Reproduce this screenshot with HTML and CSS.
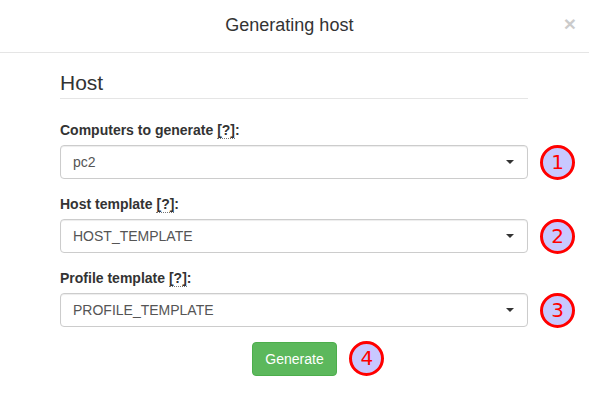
FILE: index.html
```html
<!DOCTYPE html>
<html lang="en">
<head>
<meta charset="utf-8">
<title>Generating host</title>
<link rel="stylesheet" href="styles.css">
</head>
<body>
<div class="modal">
  <div class="modal-header">
    <button class="close" type="button">&times;</button>
    <h4 class="modal-title">Generating host</h4>
  </div>
  <div class="modal-body">
    <form class="form">
      <fieldset>
        <legend>Host</legend>
        <div class="form-group">
          <label>Computers to generate <abbr>[?]</abbr>:</label>
          <div class="row">
            <div class="select"><span>pc2</span><i class="caret"></i></div>
            <span class="mark">1</span>
          </div>
        </div>
        <div class="form-group">
          <label>Host template <abbr>[?]</abbr>:</label>
          <div class="row">
            <div class="select"><span>HOST_TEMPLATE</span><i class="caret"></i></div>
            <span class="mark">2</span>
          </div>
        </div>
        <div class="form-group">
          <label>Profile template <abbr>[?]</abbr>:</label>
          <div class="row">
            <div class="select"><span>PROFILE_TEMPLATE</span><i class="caret"></i></div>
            <span class="mark">3</span>
          </div>
        </div>
      </fieldset>
    </form>
    <div class="actions">
      <button class="btn" type="button">Generate<span class="mark mark-btn">4</span></button>
    </div>
  </div>
</div>
</body>
</html>
```
FILE: styles.css
```css
* { box-sizing: border-box; }
html, body { margin: 0; padding: 0; background: #fff; }
body {
  font-family: "Liberation Sans", Arial, sans-serif;
  font-size: 14px;
  line-height: 20px;
  color: #333;
}
.modal { width: 589px; }
.modal-header {
  padding: 12px 15px 14px;
  border-bottom: 1px solid #e5e5e5;
}
.modal-title {
  margin: 0;
  font-size: 18px;
  font-weight: normal;
  line-height: 26px;
  text-align: center;
  color: #333;
}
.close {
  float: right;
  margin-top: -1px;
  margin-right: -2px;
  padding: 0;
  border: 0;
  background: transparent;
  font-family: "Liberation Sans", Arial, sans-serif;
  font-size: 21px;
  font-weight: bold;
  line-height: 26px;
  color: #000;
  opacity: 0.2;
}
.modal-body { padding: 15px 0 15px 60px; }
.form { width: 468px; }
fieldset { margin: 0; padding: 0; border: 0; min-width: 0; }
legend {
  display: block;
  width: 100%;
  padding: 0;
  margin-bottom: 21px;
  font-size: 21px;
  line-height: 30px;
  color: #333;
  border-bottom: 1px solid #e5e5e5;
}
.form-group { margin-bottom: 15px; }
label {
  display: block;
  margin-bottom: 5px;
  font-weight: bold;
}
abbr {
  text-decoration: none;
  border-bottom: 1px dotted #777;
  cursor: help;
}
.row {
  display: flex;
  align-items: center;
  gap: 12px;
  width: 503px;
  height: 34px;
}
.select {
  flex: 0 0 468px;
  height: 34px;
  padding: 6px 12px;
  display: flex;
  align-items: center;
  justify-content: space-between;
  border: 1px solid #ccc;
  border-radius: 4px;
  box-shadow: inset 0 1px 1px rgba(0,0,0,.075);
  color: #555;
  background: #fff;
}
.caret {
  width: 0;
  height: 0;
  margin-right: 1px;
  border-left: 4px solid transparent;
  border-right: 4px solid transparent;
  border-top: 4px solid #333;
}
.mark {
  flex: 0 0 35px;
  width: 35px;
  height: 35px;
  border: 3px solid #f00;
  border-radius: 50%;
  background: #c8c8ff;
  color: #f00;
  font-family: "DejaVu Sans", sans-serif;
  font-size: 20px;
  line-height: 29px;
  text-align: center;
  font-weight: normal;
}
.actions {
  margin-left: -60px;
  text-align: center;
}
.btn {
  position: relative;
  display: inline-block;
  padding: 6px 12px;
  font-family: "Liberation Sans", Arial, sans-serif;
  font-size: 14px;
  line-height: 20px;
  color: #fff;
  background: #5cb85c;
  border: 1px solid #4cae4c;
  border-radius: 4px;
}
.mark-btn {
  position: absolute;
  left: 96px;
  top: -2px;
}
```
